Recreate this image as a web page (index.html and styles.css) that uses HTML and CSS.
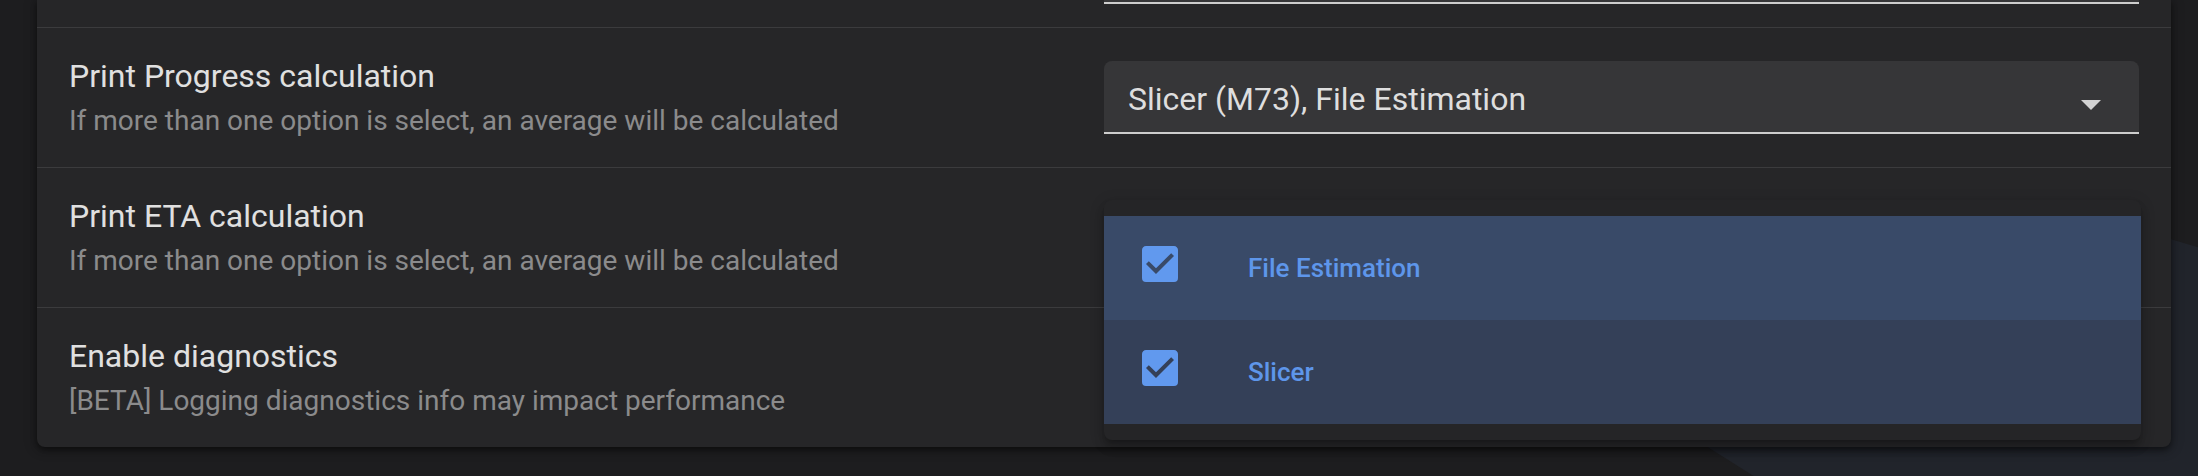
FILE: index.html
```html
<!DOCTYPE html>
<html lang="en">
<head>
<meta charset="utf-8">
<title>Settings</title>
<link rel="stylesheet" href="styles.css">
</head>
<body>
<svg class="backdrop" width="2198" height="476" viewBox="0 0 2198 476" aria-hidden="true">
  <polygon points="675,-204 2400,307 2400,700 2109,700" fill="#21242b"/>
</svg>
<main class="page">
  <section class="card">
    <div class="row row-partial">
      <div class="col-text"></div>
      <div class="col-field col-top"><div class="field-tail"></div></div>
    </div>
    <div class="row">
      <div class="col-text">
        <div class="title">Print Progress calculation</div>
        <div class="subtitle">If more than one option is select, an average will be calculated</div>
      </div>
      <div class="col-field">
        <div class="select">
          <span class="select-value">Slicer (M73), File Estimation</span>
          <svg class="select-arrow" viewBox="0 0 24 24"><path d="M7,10L12,15L17,10H7Z"/></svg>
        </div>
      </div>
    </div>
    <div class="row">
      <div class="col-text">
        <div class="title">Print ETA calculation</div>
        <div class="subtitle">If more than one option is select, an average will be calculated</div>
      </div>
      <div class="col-field">
        <div class="menu">
          <div class="menu-item item-active">
            <svg class="check" viewBox="0 0 24 24"><path fill-rule="evenodd" d="M10,17L5,12L6.41,10.58L10,14.17L17.59,6.58L19,8L10,17ZM19,3H5C3.89,3 3,3.89 3,5V19A2,2 0 0,0 5,21H19A2,2 0 0,0 21,19V5C21,3.89 20.1,3 19,3Z"/></svg>
            <span class="item-label">File Estimation</span>
          </div>
          <div class="menu-item item-selected">
            <svg class="check" viewBox="0 0 24 24"><path fill-rule="evenodd" d="M10,17L5,12L6.41,10.58L10,14.17L17.59,6.58L19,8L10,17ZM19,3H5C3.89,3 3,3.89 3,5V19A2,2 0 0,0 5,21H19A2,2 0 0,0 21,19V5C21,3.89 20.1,3 19,3Z"/></svg>
            <span class="item-label">Slicer</span>
          </div>
        </div>
      </div>
    </div>
    <div class="row">
      <div class="col-text">
        <div class="title">Enable diagnostics</div>
        <div class="subtitle">[BETA] Logging diagnostics info may impact performance</div>
      </div>
      <div class="col-field"></div>
    </div>
  </section>
</main>
</body>
</html>
```

FILE: styles.css
```css
html, body {
  margin: 0;
  padding: 0;
}

body {
  width: 2198px;
  height: 476px;
  overflow: hidden;
  position: relative;
  background: #1d1d1f;
  font-family: Roboto, "Noto Sans", "Liberation Sans", sans-serif;
}

.backdrop {
  position: absolute;
  top: 0;
  left: 0;
  z-index: 0;
}

.page {
  position: relative;
  z-index: 1;
  padding: 0 27px 0 37px;
}

.card {
  position: relative;
  background: #262628;
  border-radius: 0 0 8px 8px;
  box-shadow: 0 3px 6px rgba(0, 0, 0, 0.45), 0 1px 14px rgba(0, 0, 0, 0.25);
}

.row {
  box-sizing: border-box;
  height: 140px;
  display: grid;
  grid-template-columns: 1fr 1fr;
  padding: 0 32px;
  border-top: 1px solid #3b3b3d;
}

.row-partial {
  height: 27px;
  border-top: 0;
}

.col-text {
  display: flex;
  flex-direction: column;
  justify-content: center;
  padding-top: 2px;
}

.title {
  font-size: 32px;
  line-height: 40px;
  color: #e0e0e0;
}

.subtitle {
  font-size: 28px;
  line-height: 40px;
  margin-top: 5px;
  color: #8b8b8c;
}

.col-field {
  position: relative;
  display: flex;
  align-items: center;
}

.col-top {
  align-items: flex-start;
}

.field-tail {
  flex: 1;
  height: 2px;
  background: #363638;
  border-bottom: 2px solid #cdcdcd;
}

.select {
  flex: 1;
  box-sizing: border-box;
  height: 73px;
  padding: 4px 24px 0 24px;
  display: flex;
  align-items: center;
  background: #363638;
  border-radius: 8px 8px 0 0;
  border-bottom: 2px solid #cdcdcd;
}

.select-value {
  flex: 1;
  font-size: 32px;
  line-height: 40px;
  color: #dedede;
}

.select-arrow {
  width: 48px;
  height: 48px;
  margin-top: 10px;
  fill: #d2d2d2;
}

.menu {
  position: absolute;
  top: 32px;
  left: 0;
  width: 1037px;
  padding: 16px 0;
  background: #252527;
  border-radius: 8px;
  z-index: 2;
  box-shadow: 0 5px 5px -3px rgba(0, 0, 0, 0.2), 0 8px 10px 1px rgba(0, 0, 0, 0.14), 0 3px 14px 2px rgba(0, 0, 0, 0.12);
}

.menu-item {
  height: 104px;
  display: flex;
  align-items: center;
  padding: 0 32px;
}

.item-active {
  background: #394a68;
}

.item-selected {
  background: #344058;
}

.check {
  width: 48px;
  height: 48px;
  align-self: flex-start;
  margin-top: 24px;
  margin-right: 64px;
  fill: #6199ee;
}

.item-label {
  font-size: 26px;
  font-weight: 500;
  color: #5e96ea;
}
```
